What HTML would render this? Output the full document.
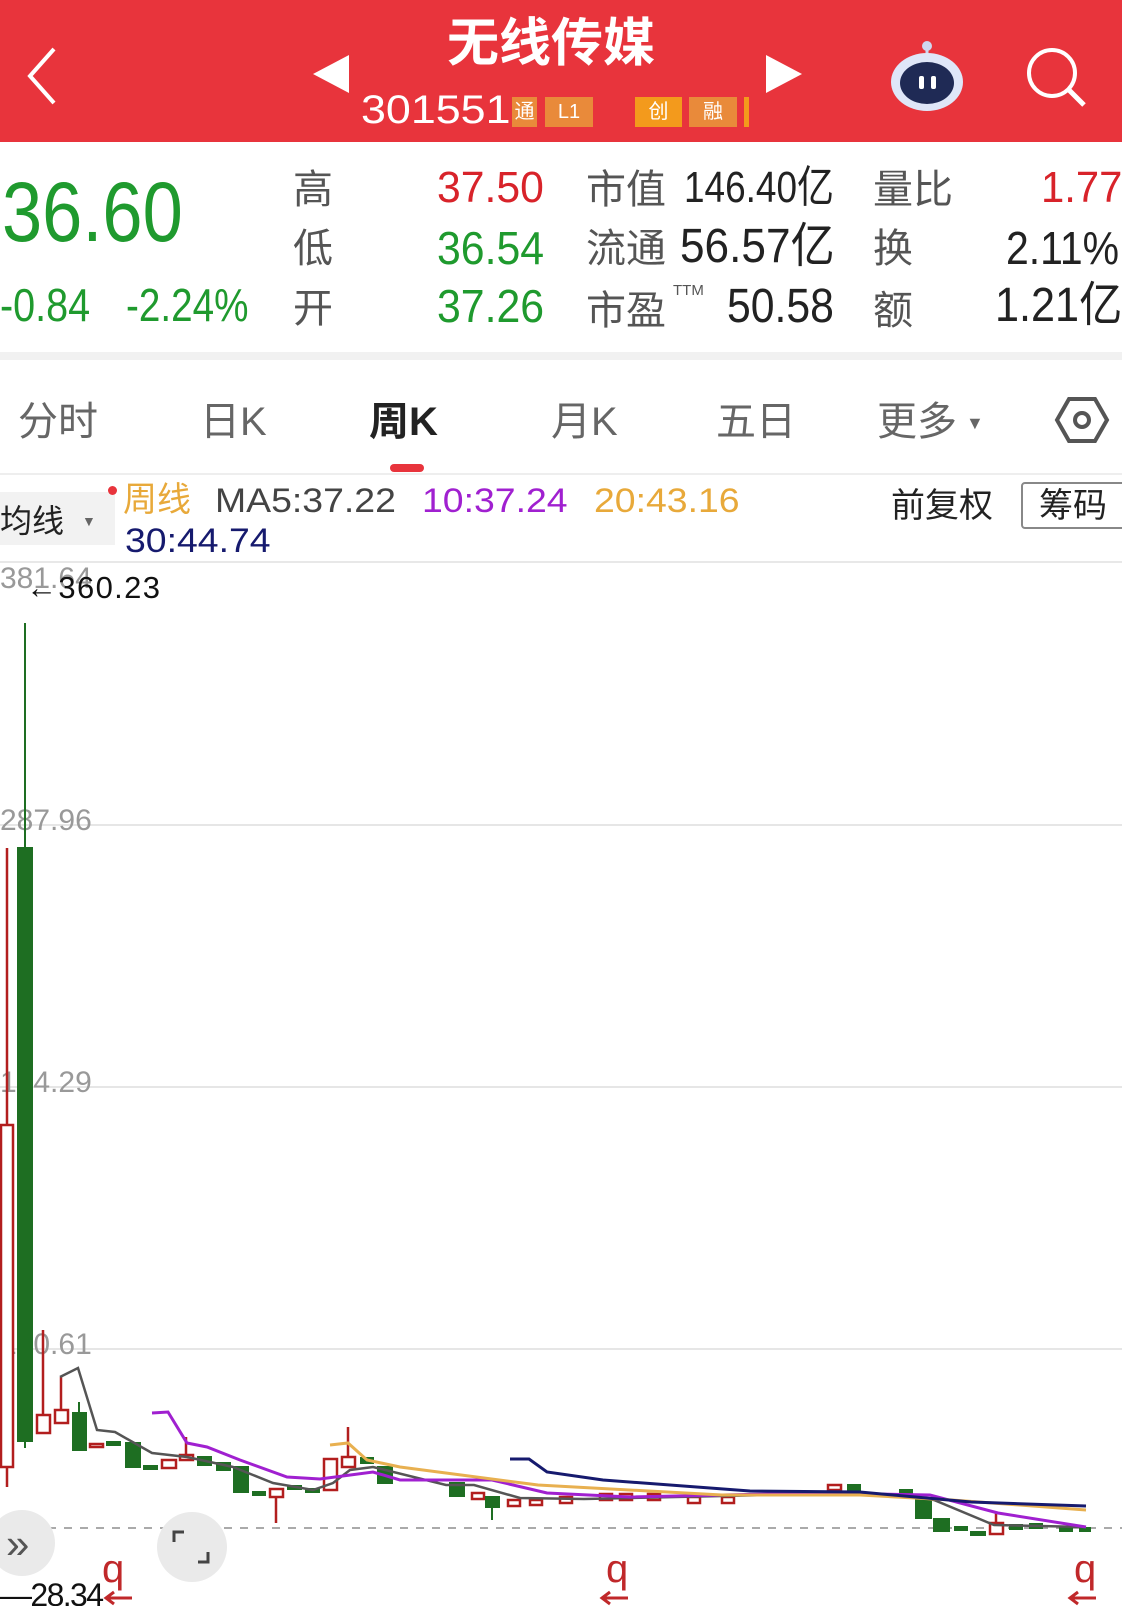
<!DOCTYPE html>
<html><head><meta charset="utf-8"><style>
*{margin:0;padding:0;box-sizing:border-box}
body{width:1122px;height:1606px;background:#fff;position:relative;overflow:hidden;font-family:"Liberation Sans","Noto Sans CJK SC",sans-serif}
.a{position:absolute;white-space:nowrap;line-height:1;transform-origin:left top}
.hdr{position:absolute;left:0;top:0;width:1122px;height:142px;background:#e8343c}
.r{color:#d8232a}.g{color:#1f9a2e}.k{color:#222}.gr{color:#555}
.tag{position:absolute;top:97px;height:30px;font-size:20px;color:#fff;text-align:center;line-height:30px}
.c{font-size:40px;color:#555}
</style></head><body>
<div class="hdr">
<svg class="a" style="left:22px;top:45px" width="40" height="62"><path d="M32 4 L8 31 L32 58" stroke="#fff" stroke-width="4" fill="none"/></svg>
<svg class="a" style="left:313px;top:55px" width="36" height="40"><path d="M36 0 L0 19 L36 38Z" fill="#fff"/></svg>
<svg class="a" style="left:766px;top:55px" width="36" height="40"><path d="M0 0 L36 19 L0 38Z" fill="#fff"/></svg>
<div class="a" style="left:447px;top:18px;font-size:52px;color:#fff;font-weight:bold">无线传媒</div>
<div class="a" style="left:361px;top:90px;font-size:40px;color:#fff;transform:scaleX(1.12)">301551</div>
<div class="tag" style="left:512px;width:25px;background:#e98a3a">通</div>
<div class="tag" style="left:545px;width:48px;background:#e98a3a">L1</div>
<div class="tag" style="left:635px;width:47px;background:#f39a1c">创</div>
<div class="tag" style="left:689px;width:48px;background:#e98a3a">融</div>
<div class="tag" style="left:744px;width:5px;background:#f39a1c"></div>
<svg class="a" style="left:889px;top:40px" width="76" height="72"><line x1="38" y1="4" x2="38" y2="14" stroke="#cfd8f0" stroke-width="3"/><circle cx="38" cy="6" r="5" fill="#cfd8f0"/><ellipse cx="38" cy="42" rx="36" ry="29" fill="#dfe6f8"/><ellipse cx="38" cy="43" rx="27" ry="21" fill="#1f2a55"/><rect x="30" y="36" width="5" height="13" rx="2" fill="#fff"/><rect x="42" y="36" width="5" height="13" rx="2" fill="#fff"/></svg>
<svg class="a" style="left:1022px;top:45px" width="68" height="62"><circle cx="30" cy="28" r="23" stroke="#fff" stroke-width="4" fill="none"/><path d="M46 44 L62 60" stroke="#fff" stroke-width="5"/></svg>
</div>

<div class="a g" style="left:2px;top:170px;font-size:84px;transform:scaleX(.86)">36.60</div>
<div class="a g" style="left:0;top:282px;font-size:46px;transform:scaleX(.86)">-0.84</div>
<div class="a g" style="left:126px;top:282px;font-size:46px;transform:scaleX(.84)">-2.24%</div>
<div class="a c" style="left:293px;top:170px">高</div>
<div class="a c" style="left:293px;top:229px">低</div>
<div class="a c" style="left:293px;top:289px">开</div>
<div class="a r" style="left:437px;top:166px;font-size:44px;transform:scaleX(.97)">37.50</div>
<div class="a g" style="left:437px;top:225px;font-size:46px;transform:scaleX(.93)">36.54</div>
<div class="a g" style="left:437px;top:283px;font-size:46px;transform:scaleX(.93)">37.26</div>
<div class="a c" style="left:586px;top:170px">市值</div>
<div class="a c" style="left:586px;top:229px">流通</div>
<div class="a c" style="left:586px;top:291px">市盈</div>
<div class="a gr" style="left:673px;top:283px;font-size:15px">TTM</div>
<div class="a k" style="left:684px;top:166px;font-size:44px;transform:scaleX(.84)">146.40亿</div>
<div class="a k" style="left:680px;top:223px;font-size:48px;transform:scaleX(.92)">56.57亿</div>
<div class="a k" style="left:727px;top:283px;font-size:48px;transform:scaleX(.89)">50.58</div>
<div class="a c" style="left:873px;top:170px">量比</div>
<div class="a c" style="left:873px;top:229px">换</div>
<div class="a c" style="left:873px;top:291px">额</div>
<div class="a r" style="left:1041px;top:166px;font-size:44px;transform:scaleX(.95)">1.77</div>
<div class="a k" style="left:1006px;top:225px;font-size:46px;transform:scaleX(.89)">2.11%</div>
<div class="a k" style="left:995px;top:282px;font-size:48px;transform:scaleX(.9)">1.21亿</div>
<div class="a" style="left:0;top:352px;width:1122px;height:8px;background:#f1f1f1"></div>

<div class="a" style="left:18px;top:402px;font-size:40px;color:#666">分时</div>
<div class="a" style="left:200px;top:402px;font-size:40px;color:#666">日K</div>
<div class="a" style="left:369px;top:402px;font-size:40px;color:#222;font-weight:bold">周K</div>
<div class="a" style="left:551px;top:402px;font-size:40px;color:#666">月K</div>
<div class="a" style="left:716px;top:402px;font-size:40px;color:#666">五日</div>
<div class="a" style="left:877px;top:402px;font-size:40px;color:#666">更多</div>
<div class="a" style="left:966px;top:414px;font-size:18px;color:#666">▼</div>
<svg class="a" style="left:1054px;top:396px" width="56" height="48"><path d="M15 3 L41 3 L53 24 L41 45 L15 45 L3 24Z" stroke="#555" stroke-width="4" fill="none"/><circle cx="28" cy="24" r="7" stroke="#555" stroke-width="4" fill="none"/></svg>
<div class="a" style="left:390px;top:464px;width:34px;height:8px;border-radius:4px;background:#e8343c"></div>
<div class="a" style="left:0;top:473px;width:1122px;height:2px;background:#eee"></div>

<div class="a" style="left:0;top:492px;width:115px;height:53px;background:#f2f2f2"></div>
<div class="a k" style="left:0;top:505px;font-size:32px">均线</div>
<div class="a" style="left:82px;top:514px;font-size:14px;color:#666">▼</div>
<div class="a" style="left:108px;top:486px;width:9px;height:9px;border-radius:5px;background:#e8343c"></div>
<div class="a" style="left:123px;top:483px;font-size:34px;color:#e8a93a">周线</div>
<div class="a" style="left:215px;top:484px;font-size:34px;color:#444;transform:scaleX(1.1)">MA5:37.22</div>
<div class="a" style="left:422px;top:484px;font-size:34px;color:#a020d0;transform:scaleX(1.1)">10:37.24</div>
<div class="a" style="left:594px;top:484px;font-size:34px;color:#e8a93a;transform:scaleX(1.1)">20:43.16</div>
<div class="a" style="left:125px;top:524px;font-size:34px;color:#161a6e;transform:scaleX(1.1)">30:44.74</div>
<div class="a k" style="left:891px;top:489px;font-size:34px">前复权</div>
<div class="a k" style="left:1021px;top:482px;width:110px;height:47px;border:2px solid #888;border-radius:4px;font-size:34px;padding:5px 0 0 16px">筹码</div>
<div class="a" style="left:0;top:561px;width:1122px;height:2px;background:#e8e8e8"></div>

<svg class="a" style="left:0;top:0" width="1122" height="1606">
<g stroke="#e6e6e6" stroke-width="2"><line x1="0" y1="825" x2="1122" y2="825"/><line x1="0" y1="1087" x2="1122" y2="1087"/><line x1="0" y1="1349" x2="1122" y2="1349"/></g>
<line x1="0" y1="1528" x2="1122" y2="1528" stroke="#aaa" stroke-width="2" stroke-dasharray="8,8"/>
<g font-size="30" fill="#999" font-family="Liberation Sans"><text x="0" y="830">287.96</text><text x="0" y="1092">194.29</text><text x="0" y="1354">100.61</text><text x="0" y="588">381.64</text></g>
<text x="26" y="598" font-size="31" fill="#111" font-family="Liberation Sans" textLength="134">←360.23</text>
<g stroke="#b21e1e" stroke-width="2.5" fill="#fff">
<line x1="7" y1="848" x2="7" y2="1487"/><rect x="1" y="1125" width="12" height="342"/>
<line x1="43" y1="1330" x2="43" y2="1433"/><rect x="37" y="1415" width="13" height="18"/>
<line x1="61" y1="1377" x2="61" y2="1423"/><rect x="55" y="1410" width="13" height="13"/>
<rect x="90" y="1444" width="13" height="3"/><rect x="162" y="1460" width="14" height="8"/>
<line x1="186" y1="1437" x2="186" y2="1460"/><rect x="180" y="1455" width="13" height="5"/>
<line x1="276" y1="1489" x2="276" y2="1523"/><rect x="270" y="1489" width="13" height="8"/>
<rect x="324" y="1459" width="13" height="31"/>
<line x1="348" y1="1427" x2="348" y2="1467"/><rect x="342" y="1457" width="13" height="10"/>
<rect x="472" y="1493" width="12" height="6"/><rect x="508" y="1500" width="12" height="6"/><rect x="530" y="1500" width="12" height="5"/><rect x="560" y="1497" width="12" height="6"/><rect x="600" y="1494" width="12" height="6"/><rect x="620" y="1494" width="12" height="6"/><rect x="648" y="1494" width="12" height="6"/><rect x="688" y="1497" width="12" height="6"/><rect x="722" y="1497" width="12" height="6"/>
<rect x="828" y="1485" width="13" height="5"/>
<line x1="996" y1="1513" x2="996" y2="1523"/><rect x="990" y="1523" width="13" height="11"/>
</g>
<g fill="#1e6e22" stroke="#1e6e22" stroke-width="2">
<line x1="25" y1="623" x2="25" y2="1448"/><rect x="18" y="848" width="14" height="593"/>
<line x1="79" y1="1402" x2="79" y2="1450"/><rect x="73" y="1413" width="13" height="37"/>
<rect x="107" y="1442" width="13" height="3"/><rect x="126" y="1443" width="14" height="24"/><rect x="144" y="1466" width="13" height="3"/>
<rect x="198" y="1457" width="13" height="8"/><rect x="217" y="1463" width="13" height="7"/><rect x="234" y="1467" width="14" height="25"/><rect x="253" y="1492" width="12" height="3"/>
<rect x="288" y="1486" width="13" height="3"/><rect x="306" y="1489" width="13" height="3"/><rect x="361" y="1458" width="12" height="5"/><rect x="378" y="1467" width="14" height="16"/>
<rect x="450" y="1483" width="14" height="13"/><line x1="492" y1="1500" x2="492" y2="1520"/><rect x="486" y="1497" width="13" height="10"/>
<rect x="848" y="1485" width="12" height="5"/><rect x="900" y="1490" width="12" height="4"/>
<rect x="916" y="1498" width="15" height="20"/><rect x="934" y="1519" width="15" height="12"/><rect x="955" y="1527" width="12" height="3"/><rect x="971" y="1532" width="14" height="3"/>
<rect x="1010" y="1525" width="12" height="4"/><rect x="1030" y="1524" width="12" height="4"/><rect x="1060" y="1527" width="12" height="4"/><rect x="1080" y="1528" width="10" height="3"/>
</g>
<polyline points="60,1377 78,1368 97,1430 115,1432 152,1453 187,1457 233,1467 273,1483 313,1490 333,1483 350,1470 373,1467 446,1485 474,1485 520,1498 584,1499 768,1495 906,1495 934,1500 994,1525 1086,1527" stroke="#555" stroke-width="2.5" fill="none"/>
<polyline points="152,1413 168,1412 187,1443 207,1447 240,1460 287,1477 320,1479 373,1472 400,1480 492,1480 547,1493 630,1497 814,1493 930,1495 998,1513 1086,1527" stroke="#a020d0" stroke-width="3" fill="none"/>
<polyline points="330,1445 348,1443 367,1460 400,1467 538,1485 722,1495 860,1495 952,1500 1086,1510" stroke="#e8b050" stroke-width="3" fill="none"/>
<polyline points="510,1459 529,1459 547,1472 603,1480 750,1491 860,1492 971,1502 1086,1506" stroke="#161a6e" stroke-width="3" fill="none"/>
<circle cx="22" cy="1543" r="33" fill="#eaeaea"/><text x="6" y="1558" font-size="42" fill="#555" font-family="Liberation Sans">»</text>
<ellipse cx="192" cy="1547" rx="35" ry="35" fill="#eaeaea"/><path d="M174 1542 V1532 H184 M208 1552 V1562 H198" stroke="#444" stroke-width="3" fill="none"/>
<g fill="#c0282a" font-size="40" font-family="Liberation Sans"><text x="102" y="1582">q</text><text x="606" y="1582">q</text><text x="1074" y="1582">q</text></g>
<g stroke="#c0282a" stroke-width="3" fill="none"><path d="M108 1598 H132 M114 1592 L106 1598 L114 1604"/><path d="M602 1598 H628 M610 1592 L602 1598 L610 1604"/><path d="M1070 1598 H1096 M1078 1592 L1070 1598 L1078 1604"/></g>
<text x="0" y="1606" font-size="32" fill="#111" font-family="Liberation Sans" textLength="104">—28.34</text>
</svg>
</body></html>
